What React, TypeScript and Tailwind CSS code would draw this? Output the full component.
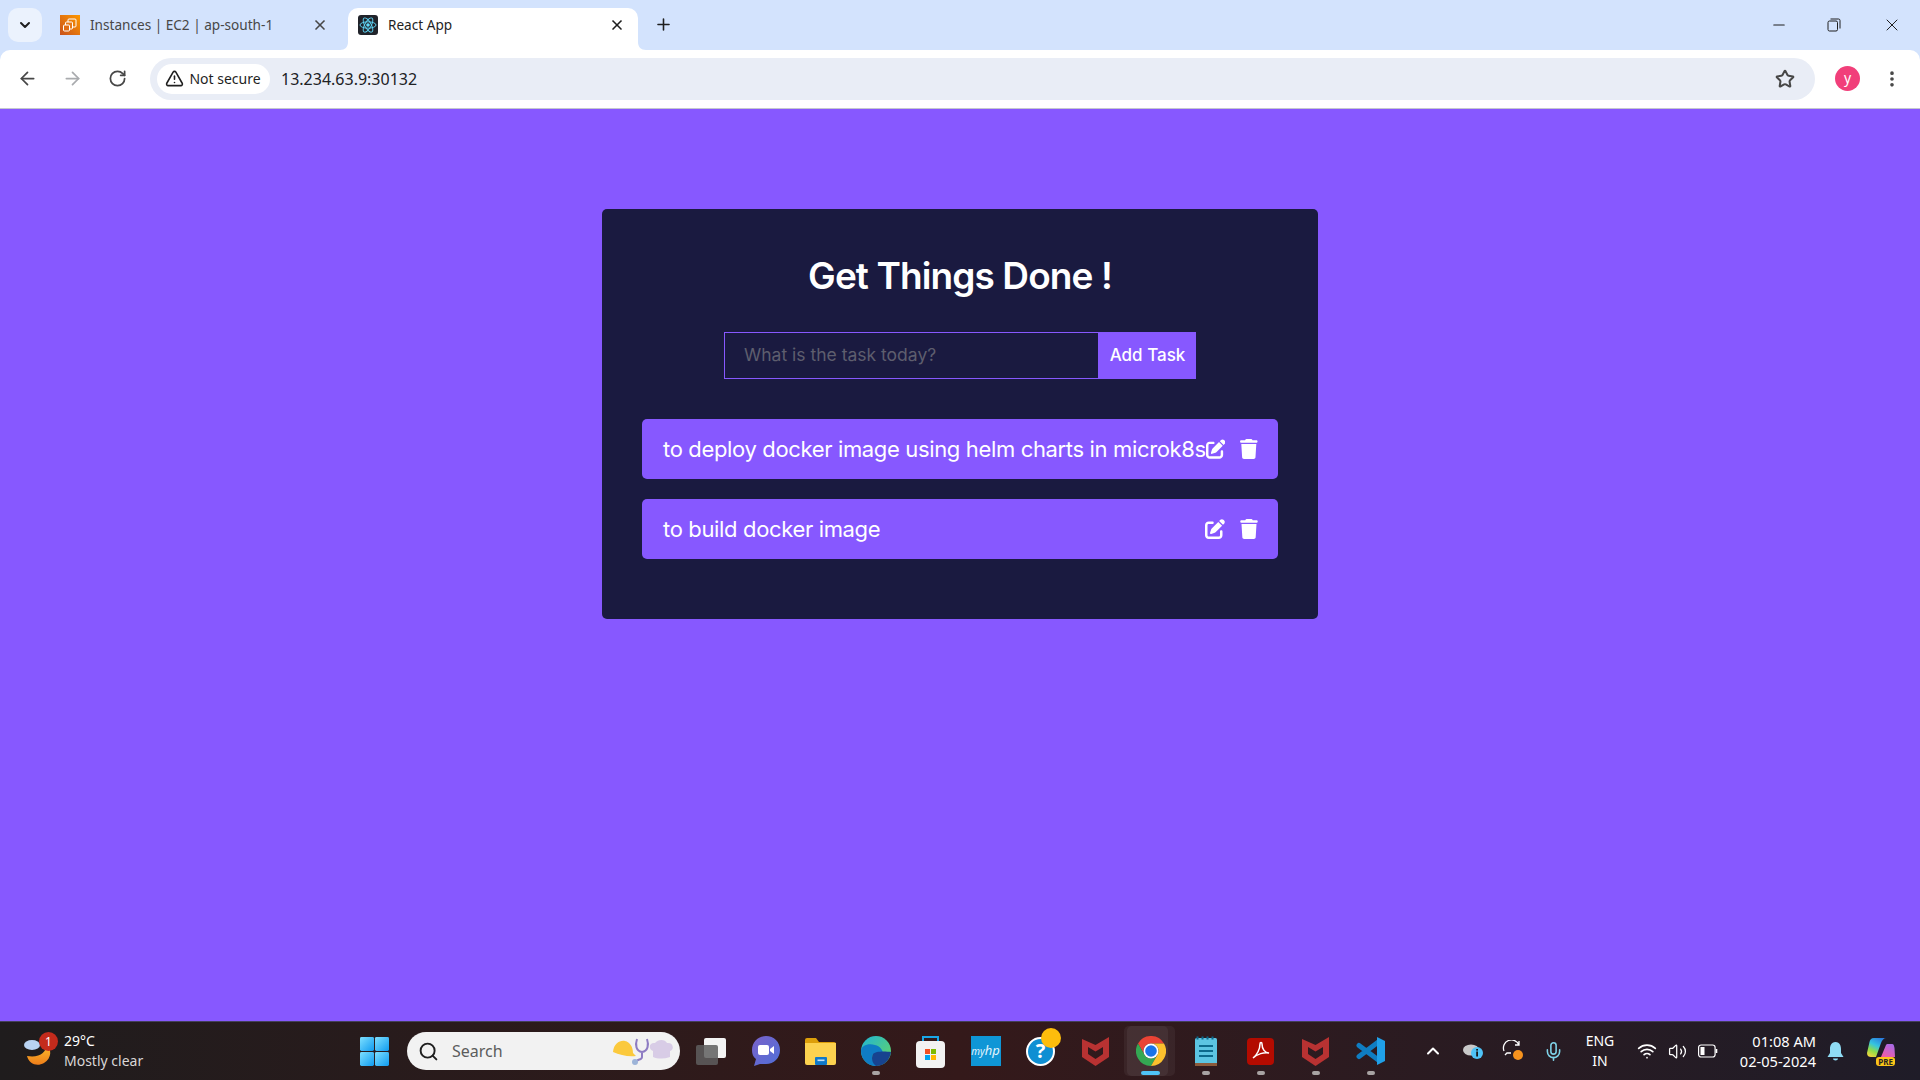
import type { ReactNode } from "react";
import { FaPenToSquare, FaTrash } from "react-icons/fa6";
import {
  ArrowLeft,
  ArrowRight,
  ChevronDown,
  ChevronUp,
  EllipsisVertical,
  Mic,
  Minus,
  Plus,
  RotateCw,
  Search,
  Star,
  TriangleAlert,
  Volume2,
  Wifi,
  X,
} from "lucide-react";

const tasks = [
  "to deploy docker image using helm charts in microk8s",
  "to build docker image",
];

function Ec2Icon() {
  return (
    <svg width="20" height="20" viewBox="0 0 20 20" className="shrink-0">
      <defs>
        <linearGradient id="ec2" x1="0" y1="1" x2="1" y2="0">
          <stop offset="0" stopColor="#c8511b" />
          <stop offset="1" stopColor="#f90" />
        </linearGradient>
      </defs>
      <rect width="20" height="20" fill="url(#ec2)" />
      <rect x="8" y="4" width="8" height="8" rx="1" fill="none" stroke="#fff" strokeWidth="1" />
      <rect x="5.5" y="7" width="7" height="7" rx="1" fill="#e57a1a" stroke="#fff" strokeWidth="1" />
      <rect x="3.5" y="10" width="6" height="6" rx="1" fill="#e06d14" stroke="#fff" strokeWidth="1" />
    </svg>
  );
}

function ReactIcon() {
  return (
    <svg width="20" height="20" viewBox="0 0 20 20" className="shrink-0">
      <rect width="20" height="20" rx="3" fill="#20232a" />
      <circle cx="10" cy="10" r="1.8" fill="#61dafb" />
      <g fill="none" stroke="#61dafb" strokeWidth="0.9">
        <ellipse cx="10" cy="10" rx="8" ry="3.2" />
        <ellipse cx="10" cy="10" rx="8" ry="3.2" transform="rotate(60 10 10)" />
        <ellipse cx="10" cy="10" rx="8" ry="3.2" transform="rotate(120 10 10)" />
      </g>
    </svg>
  );
}

function TabFlare({ side }: { side: "left" | "right" }) {
  return (
    <svg width="8" height="8" viewBox="0 0 8 8" className="shrink-0 self-end">
      <path d={side === "left" ? "M8 0V8H0C5 8 8 5 8 0Z" : "M0 0V8H8C3 8 0 5 0 0Z"} fill="#fff" />
    </svg>
  );
}

function BrowserChrome() {
  return (
    <div className="shrink-0 bg-[#d3e3fd] font-['Noto_Sans',sans-serif]">
      <div className="flex h-[50px] items-end">
        <div className="mb-[8px] ml-[8px] flex size-[34px] items-center justify-center rounded-[10px] bg-[#ebf2fd] text-[#1f1f1f]">
          <ChevronDown size={16} strokeWidth={3} />
        </div>
        <div className="ml-[18px] flex h-[42px] w-[280px] items-center pb-[8px]">
          <Ec2Icon />
          <span className="ml-[10px] w-[222px] text-[13.6px] whitespace-nowrap text-[#474747]">Instances | EC2 | ap-south-1</span>
          <X size={16} strokeWidth={2.5} className="text-[#474747]" />
        </div>
        <TabFlare side="left" />
        <div className="flex h-[42px] w-[290px] items-center rounded-t-[10px] bg-white pb-[8px] pl-[10px]">
          <ReactIcon />
          <span className="ml-[10px] w-[221px] text-[13.6px] text-[#1f1f1f]">React App</span>
          <X size={16} strokeWidth={2.5} className="text-[#1f1f1f]" />
        </div>
        <TabFlare side="right" />
        <Plus size={19} strokeWidth={2} className="mb-[16px] ml-[8px] text-[#1f1f1f]" />
        <div className="mb-[15px] ml-auto flex items-center text-[#1f1f1f]">
          <Minus size={18} strokeWidth={1.4} />
          <svg width="14" height="14" viewBox="0 0 14 14" className="ml-[39px]" fill="none" stroke="#1f1f1f" strokeWidth="1">
            <rect x="1" y="3" width="9.5" height="10" rx="1.5" />
            <path d="M3.5 1H11.5A1.5 1.5 0 0 1 13 2.5V10.5" />
          </svg>
          <X size={20} strokeWidth={1.2} className="mr-[18px] ml-[41px]" />
        </div>
      </div>
      <div className="flex h-[59px] items-center rounded-t-[10px] border-b border-[#c4c7cf] bg-white pr-[18px] pb-[1px]">
        <ArrowLeft size={21} strokeWidth={2} className="ml-[17px] text-[#474747]" />
        <ArrowRight size={21} strokeWidth={2} className="ml-[24px] text-[#a9abae]" />
        <RotateCw size={19} strokeWidth={2.2} className="ml-[25px] text-[#474747]" />
        <div className="ml-[23px] flex h-[42px] flex-1 items-center rounded-full bg-[#e9edf6] pr-[20px] pl-[7px]">
          <div className="flex h-[30px] w-[113px] items-center justify-center gap-[5px] rounded-full bg-white pr-[1px] text-[14px] text-[#1f1f1f]">
            <TriangleAlert size={19} strokeWidth={2} />
            <span>Not secure</span>
          </div>
          <span className="ml-[11px] text-[16px] text-[#202124]">13.234.63.9:30132</span>
          <Star size={20} strokeWidth={2.4} className="ml-auto text-[#474747]" />
        </div>
        <div className="ml-[20px] flex size-[25px] items-center justify-center rounded-full bg-[#f13f7a] pb-[2px] text-[14px] text-white">
          y
        </div>
        <EllipsisVertical size={20} strokeWidth={2.4} className="ml-[22px] text-[#474747]" />
      </div>
    </div>
  );
}

function TodoCard() {
  return (
    <div className="mt-[100px] w-[716px] rounded-[5px] bg-[#1a1a40] px-[40px] pt-[40px] pb-[60px] font-['Inter',sans-serif] text-white">
      <h1 className="mb-[29px] text-center text-[37px] leading-[54px] font-semibold tracking-[-0.9px]">Get Things Done !</h1>
      <div className="mb-[40px] flex justify-center">
        <div className="flex h-[47px] w-[375px] items-center border border-[#8758ff] pl-[19px] text-[17.5px] text-[#5e5e6e]">
          What is the task today?
        </div>
        <div className="flex h-[47px] w-[97px] items-center justify-center bg-[#8758ff] text-[17px] font-medium">Add Task</div>
      </div>
      <div className="flex flex-col gap-[20px]">
        {tasks.map((t) => (
          <div key={t} className="flex h-[60px] items-center rounded-[5px] bg-[#8758ff] pr-[19px] pl-[21px]">
            <span className="flex-1 text-[22px] tracking-[-0.35px] whitespace-nowrap">{t}</span>
            <FaPenToSquare size={20} />
            <FaTrash size={20} className="ml-[14px]" />
          </div>
        ))}
      </div>
    </div>
  );
}

function TaskSlot({ children, dot, active }: { children: ReactNode; dot?: boolean; active?: boolean }) {
  return (
    <div className="relative flex h-[50px] w-[55px] shrink-0 items-center justify-center">
      {active ? (
        <>
          <span className="absolute top-0 left-[4px] h-[50px] w-[48px] rounded-[5px] bg-white/5" />
          <span className="absolute top-0 left-[1px] h-[50px] w-[44px] rounded-[5px] bg-white/5" />
        </>
      ) : null}
      <div className="relative flex items-center justify-center">{children}</div>
      {dot ? <span className="absolute bottom-[1px] h-[4px] w-[8px] rounded-full bg-[#a8a3a3]" /> : null}
      {active ? <span className="absolute bottom-[1px] h-[4px] w-[19px] rounded-full bg-[#4fc3f7]" /> : null}
    </div>
  );
}

function WindowsLogo() {
  return (
    <svg width="29" height="29" viewBox="0 0 30 30" className="shrink-0">
      <defs>
        <linearGradient id="winA" x1="0" y1="0" x2="1" y2="1">
          <stop offset="0" stopColor="#7ee0ff" />
          <stop offset="1" stopColor="#0f9bf0" />
        </linearGradient>
      </defs>
      <rect x="0" y="0" width="14.5" height="14.5" rx="1.5" fill="url(#winA)" />
      <rect x="15.5" y="0" width="14.5" height="14.5" rx="1.5" fill="url(#winA)" />
      <rect x="0" y="15.5" width="14.5" height="14.5" rx="1.5" fill="url(#winA)" />
      <rect x="15.5" y="15.5" width="14.5" height="14.5" rx="1.5" fill="url(#winA)" />
    </svg>
  );
}

function McAfee() {
  return (
    <svg width="27" height="30" viewBox="0 0 27 30">
      <path
        fillRule="evenodd"
        d="M0 3L13.5 9L27 1V21L13.5 30L0 21ZM6 11V18L13.5 23L21 18V11L13.5 15.5Z"
        fill="#b83232"
      />
    </svg>
  );
}

function AppIcons() {
  return (
    <>
      <TaskSlot>
        <svg width="30" height="28" viewBox="0 0 30 28">
          <rect x="8" y="1" width="22" height="20" rx="2" fill="#f4f4f4" />
          <rect x="0" y="8" width="22" height="20" rx="2" fill="#5e5e5e" fillOpacity="0.85" />
        </svg>
      </TaskSlot>
      <TaskSlot>
        <svg width="30" height="32" viewBox="0 0 30 32">
          <defs>
            <linearGradient id="meet" x1="0" y1="0" x2="1" y2="1">
              <stop offset="0" stopColor="#7a62c9" />
              <stop offset="1" stopColor="#4f6fd8" />
            </linearGradient>
          </defs>
          <path d="M15 1C23 1 29 7 29 15S23 29 15 29H9L3 31L5 24C2 22 1 19 1 15C1 7 7 1 15 1Z" fill="url(#meet)" />
          <rect x="7" y="10" width="11" height="10" rx="2" fill="#fff" />
          <path d="M19 14L23 11V19L19 16Z" fill="#fff" />
        </svg>
      </TaskSlot>
      <TaskSlot>
        <svg width="31" height="28" viewBox="0 0 31 28">
          <path d="M0 3A2 2 0 0 1 2 1H11L14 5H29A2 2 0 0 1 31 7V12H0Z" fill="#dd9f0a" />
          <path d="M0 6H31V26A2 2 0 0 1 29 28H2A2 2 0 0 1 0 26Z" fill="#fcd24f" />
          <rect x="10" y="20" width="12" height="8" rx="1" fill="#0f78c8" />
          <rect x="12.5" y="22.5" width="7" height="1.6" fill="#bfe0f7" />
        </svg>
      </TaskSlot>
      <TaskSlot dot>
        <svg width="30" height="30" viewBox="0 0 30 30">
          <defs>
            <linearGradient id="edgeA" x1="0" y1="0" x2="1" y2="1">
              <stop offset="0" stopColor="#1fb4d8" />
              <stop offset="1" stopColor="#6ad85a" />
            </linearGradient>
          </defs>
          <circle cx="15" cy="15" r="15" fill="url(#edgeA)" />
          <path d="M0 15C0 9 8 7 14 9C19 10 22 14 22 18H12C10 22 12 28 17 30C8 31 0 24 0 15Z" fill="#0f7cc4" />
          <path d="M12 18C14 15 24 15 30 16C29 24 23 30 15 30C11 27 10 22 12 18Z" fill="#17438f" />
        </svg>
      </TaskSlot>
      <TaskSlot>
        <svg width="29" height="33" viewBox="0 0 29 33">
          <path d="M7 8V2H22V8" fill="none" stroke="#19a7e8" strokeWidth="2" />
          <rect x="0" y="6" width="29" height="27" rx="4" fill="#f2f2f2" />
          <rect x="9" y="14" width="5" height="5" fill="#f25022" />
          <rect x="15" y="14" width="5" height="5" fill="#7fba00" />
          <rect x="9" y="20" width="5" height="5" fill="#00a4ef" />
          <rect x="15" y="20" width="5" height="5" fill="#ffb900" />
        </svg>
      </TaskSlot>
      <TaskSlot>
        <div className="flex size-[30px] items-center justify-center bg-[#0f96d6] text-[10px] text-[#e3f4fc] italic">
          my<span className="text-[13px]">hp</span>
        </div>
      </TaskSlot>
      <TaskSlot>
        <div className="relative flex size-[29px] items-center justify-center rounded-full border-2 border-white bg-[#0f8fd3] text-[20px] font-bold text-white">
          ?
          <span className="absolute top-[-11px] right-[-8px] size-[20px] rounded-full bg-[#fdbd0c]" />
        </div>
      </TaskSlot>
      <TaskSlot>
        <McAfee />
      </TaskSlot>
      <TaskSlot active>
        <svg width="30" height="30" viewBox="0 0 30 30">
          <path d="M15 7.5H28A15 15 0 0 0 2 7.5L8.5 18.75A7.5 7.5 0 0 1 15 7.5Z" fill="#ea4335" />
          <path d="M8.5 18.75L2 7.5A15 15 0 0 0 15 30L21.5 18.75A7.5 7.5 0 0 1 8.5 18.75Z" fill="#34a853" />
          <path d="M21.5 18.75L15 30A15 15 0 0 0 28 7.5H15A7.5 7.5 0 0 1 21.5 18.75Z" fill="#fbc02d" />
          <circle cx="15" cy="15" r="7.5" fill="#fff" />
          <circle cx="15" cy="15" r="5.8" fill="#1a73e8" />
        </svg>
      </TaskSlot>
      <TaskSlot dot>
        <svg width="24" height="30" viewBox="0 0 24 30">
          <rect x="1" y="2" width="22" height="28" rx="1.5" fill="#5cc4e2" />
          <rect x="1" y="27" width="22" height="3" fill="#8b5a3c" />
          <path d="M3.5 0.5V3.5M8.5 0.5V3.5M13.5 0.5V3.5M18.5 0.5V3.5" stroke="#0d6a8c" strokeWidth="2" />
          <path d="M5 10H19M5 15H19M5 20H19" stroke="#0d6a8c" strokeWidth="2" />
        </svg>
      </TaskSlot>
      <TaskSlot dot>
        <div className="flex size-[27px] items-center justify-center rounded-[4px] bg-[#b30b00]">
          <svg width="20" height="20" viewBox="0 0 20 20" fill="none" stroke="#fff" strokeWidth="1.5">
            <path d="M2 17C6 14 9 8 9 3C9 1 11 1 11 3C11 8 14 12 18 12C13 11 6 13 2 17Z" />
          </svg>
        </div>
      </TaskSlot>
      <TaskSlot dot>
        <McAfee />
      </TaskSlot>
      <TaskSlot dot>
        <svg width="30" height="30" viewBox="0 0 30 30">
          <path d="M3 9.5L23 24.5M3 20.5L23 5.5" stroke="#0f7dc2" strokeWidth="5" strokeLinecap="round" fill="none" />
          <path d="M21 1L29 5V25L21 29Z" fill="#20a0e8" />
        </svg>
      </TaskSlot>
    </>
  );
}

function Taskbar() {
  return (
    <div className="flex h-[59px] shrink-0 items-center border-t border-[#44405a] bg-gradient-to-r from-[#1f1c1d] via-[#34191a] to-[#1f1c28] font-['Noto_Sans',sans-serif] text-white">
      <div className="relative ml-[24px] flex w-[40px] shrink-0 items-center">
        <svg width="30" height="32" viewBox="0 0 30 32">
          <defs>
            <linearGradient id="moon" x1="0" y1="0" x2="0" y2="1">
              <stop offset="0" stopColor="#fbc02d" />
              <stop offset="1" stopColor="#ee7d1a" />
            </linearGradient>
          </defs>
          <path d="M22 9C23 18 15 23 3 21C5 29 13 32 20 28C28 23 28 14 22 9Z" fill="url(#moon)" />
          <ellipse cx="8" cy="10" rx="8" ry="5" fill="#b9d3f2" />
        </svg>
        <span className="absolute top-[-3px] left-[15px] flex size-[19px] items-center justify-center rounded-full bg-[#c42b1c] text-[12px]">1</span>
      </div>
      <div className="w-[296px] shrink-0 text-[14px] leading-[20px]">
        <div>29°C</div>
        <div className="text-[#d9d6d6]">Mostly clear</div>
      </div>
      <WindowsLogo />
      <div className="ml-[18px] flex h-[38px] w-[273px] shrink-0 items-center rounded-full bg-[#f2f2f2] pl-[11px]">
        <Search size={21} strokeWidth={2.2} className="text-[#1f1f1f]" />
        <span className="ml-[13px] text-[16px] text-[#5c5c5c]">Search</span>
        <svg width="62" height="28" viewBox="0 0 62 28" className="mr-[6px] ml-auto">
          <path d="M1 15C2 6 8 3 13 4C18 5 21 10 21 16L24 19C16 20 8 18 1 15Z" fill="#fbc93d" />
          <path d="M25 2C23 8 24 14 30 15C36 14 37 8 35 2M30 15V20C30 23 26 22 25 24" fill="none" stroke="#8e7cc3" strokeWidth="2" />
          <circle cx="23" cy="25" r="3" fill="#9db4d8" />
          <path d="M41 20V14C36 12 37 5 43 6C46 2 53 2 55 6C61 5 63 12 58 14V20C52 22 46 22 41 20Z" fill="#d8cce6" />
        </svg>
      </div>
      <div className="ml-[3px] flex shrink-0 items-center">
        <AppIcons />
      </div>
      <div className="ml-[15px] flex w-[40px] shrink-0 justify-center">
        <ChevronUp size={20} strokeWidth={2.4} />
      </div>
      <div className="flex w-[40px] shrink-0 justify-center">
        <svg width="22" height="18" viewBox="0 0 22 18">
          <ellipse cx="9" cy="8" rx="8" ry="5.5" fill="#c9c9c9" />
          <circle cx="15" cy="11" r="6" fill="#4fc3f7" />
          <rect x="14.2" y="9.5" width="1.8" height="5" fill="#1a1a1a" />
          <rect x="14.2" y="7" width="1.8" height="1.6" fill="#1a1a1a" />
        </svg>
      </div>
      <div className="flex w-[40px] shrink-0 justify-center">
        <svg width="22" height="22" viewBox="0 0 22 22" fill="none" stroke="#fff" strokeWidth="1.3">
          <path d="M2 11A8 8 0 0 1 17 5M17 1V5H13M3 15L5 13H9" />
          <circle cx="16" cy="15" r="5" fill="#f7931e" stroke="none" />
        </svg>
      </div>
      <div className="flex w-[40px] shrink-0 justify-center">
        <Mic size={21} strokeWidth={1.8} className="text-[#7fd3e8]" />
      </div>
      <div className="w-[54px] shrink-0 text-center text-[14px] leading-[20px]">
        <div>ENG</div>
        <div>IN</div>
      </div>
      <div className="flex w-[40px] shrink-0 justify-center">
        <Wifi size={20} strokeWidth={2} />
      </div>
      <div className="flex w-[20px] shrink-0 justify-center">
        <Volume2 size={19} strokeWidth={1.6} />
      </div>
      <div className="ml-[4px] flex w-[34px] shrink-0 justify-center">
        <svg width="20" height="14" viewBox="0 0 20 14" fill="none" stroke="#fff" strokeWidth="1.2">
          <rect x="0.6" y="1" width="16.5" height="12" rx="2.5" />
          <rect x="2.5" y="3" width="4" height="8" fill="#fff" stroke="none" />
          <path d="M18.5 5V9" strokeWidth="1.6" />
        </svg>
      </div>
      <div className="ml-[5px] w-[86px] shrink-0 text-right text-[14.6px] leading-[20px] whitespace-nowrap">
        <div>01:08 AM</div>
        <div>02-05-2024</div>
      </div>
      <div className="ml-[9px] flex w-[20px] shrink-0 justify-center">
        <svg width="17" height="19" viewBox="0 0 17 19">
          <path d="M8.5 0C4 0 3 4 3 7V11L0.5 15H16.5L14 11V7C14 4 13 0 8.5 0Z" fill="#8fdcf5" />
          <path d="M6 16.5H11C11 19 6 19 6 16.5Z" fill="#8fdcf5" />
        </svg>
      </div>
      <div className="relative ml-[21px] flex h-[29px] w-[30px] shrink-0 justify-center">
        <svg width="29" height="21" viewBox="0 0 29 21">
          <defs>
            <linearGradient id="pilotA" x1="0.7" y1="0" x2="0.2" y2="1">
              <stop offset="0" stopColor="#2a7de0" />
              <stop offset="0.4" stopColor="#35c4e0" />
              <stop offset="0.7" stopColor="#8fdc4a" />
              <stop offset="1" stopColor="#f2d63c" />
            </linearGradient>
            <linearGradient id="pilotB" x1="0.8" y1="0" x2="0.3" y2="1">
              <stop offset="0" stopColor="#a56be8" />
              <stop offset="1" stopColor="#ee5aa8" />
            </linearGradient>
          </defs>
          <path d="M7 1C4 1 3 3 2.5 5L0 16C0 19 2 20 4 20H9L14 6C15 3 17 1 19 1Z" fill="url(#pilotA)" />
          <path d="M14 20L19 8C19.5 7 20 7 21 7H25C27 7 27 9 27.5 11L28 20Z" fill="url(#pilotB)" />
        </svg>
        <span className="absolute right-[1px] bottom-0 rounded-[3px] bg-[#fcc419] px-[2px] text-[8px] leading-[9px] font-bold text-[#222]">PRE</span>
      </div>
    </div>
  );
}

export default function App() {
  return (
    <div className="flex h-screen w-full flex-col overflow-hidden bg-[#8758ff]">
      <BrowserChrome />
      <main className="flex flex-1 items-start justify-center">
        <TodoCard />
      </main>
      <Taskbar />
    </div>
  );
}
